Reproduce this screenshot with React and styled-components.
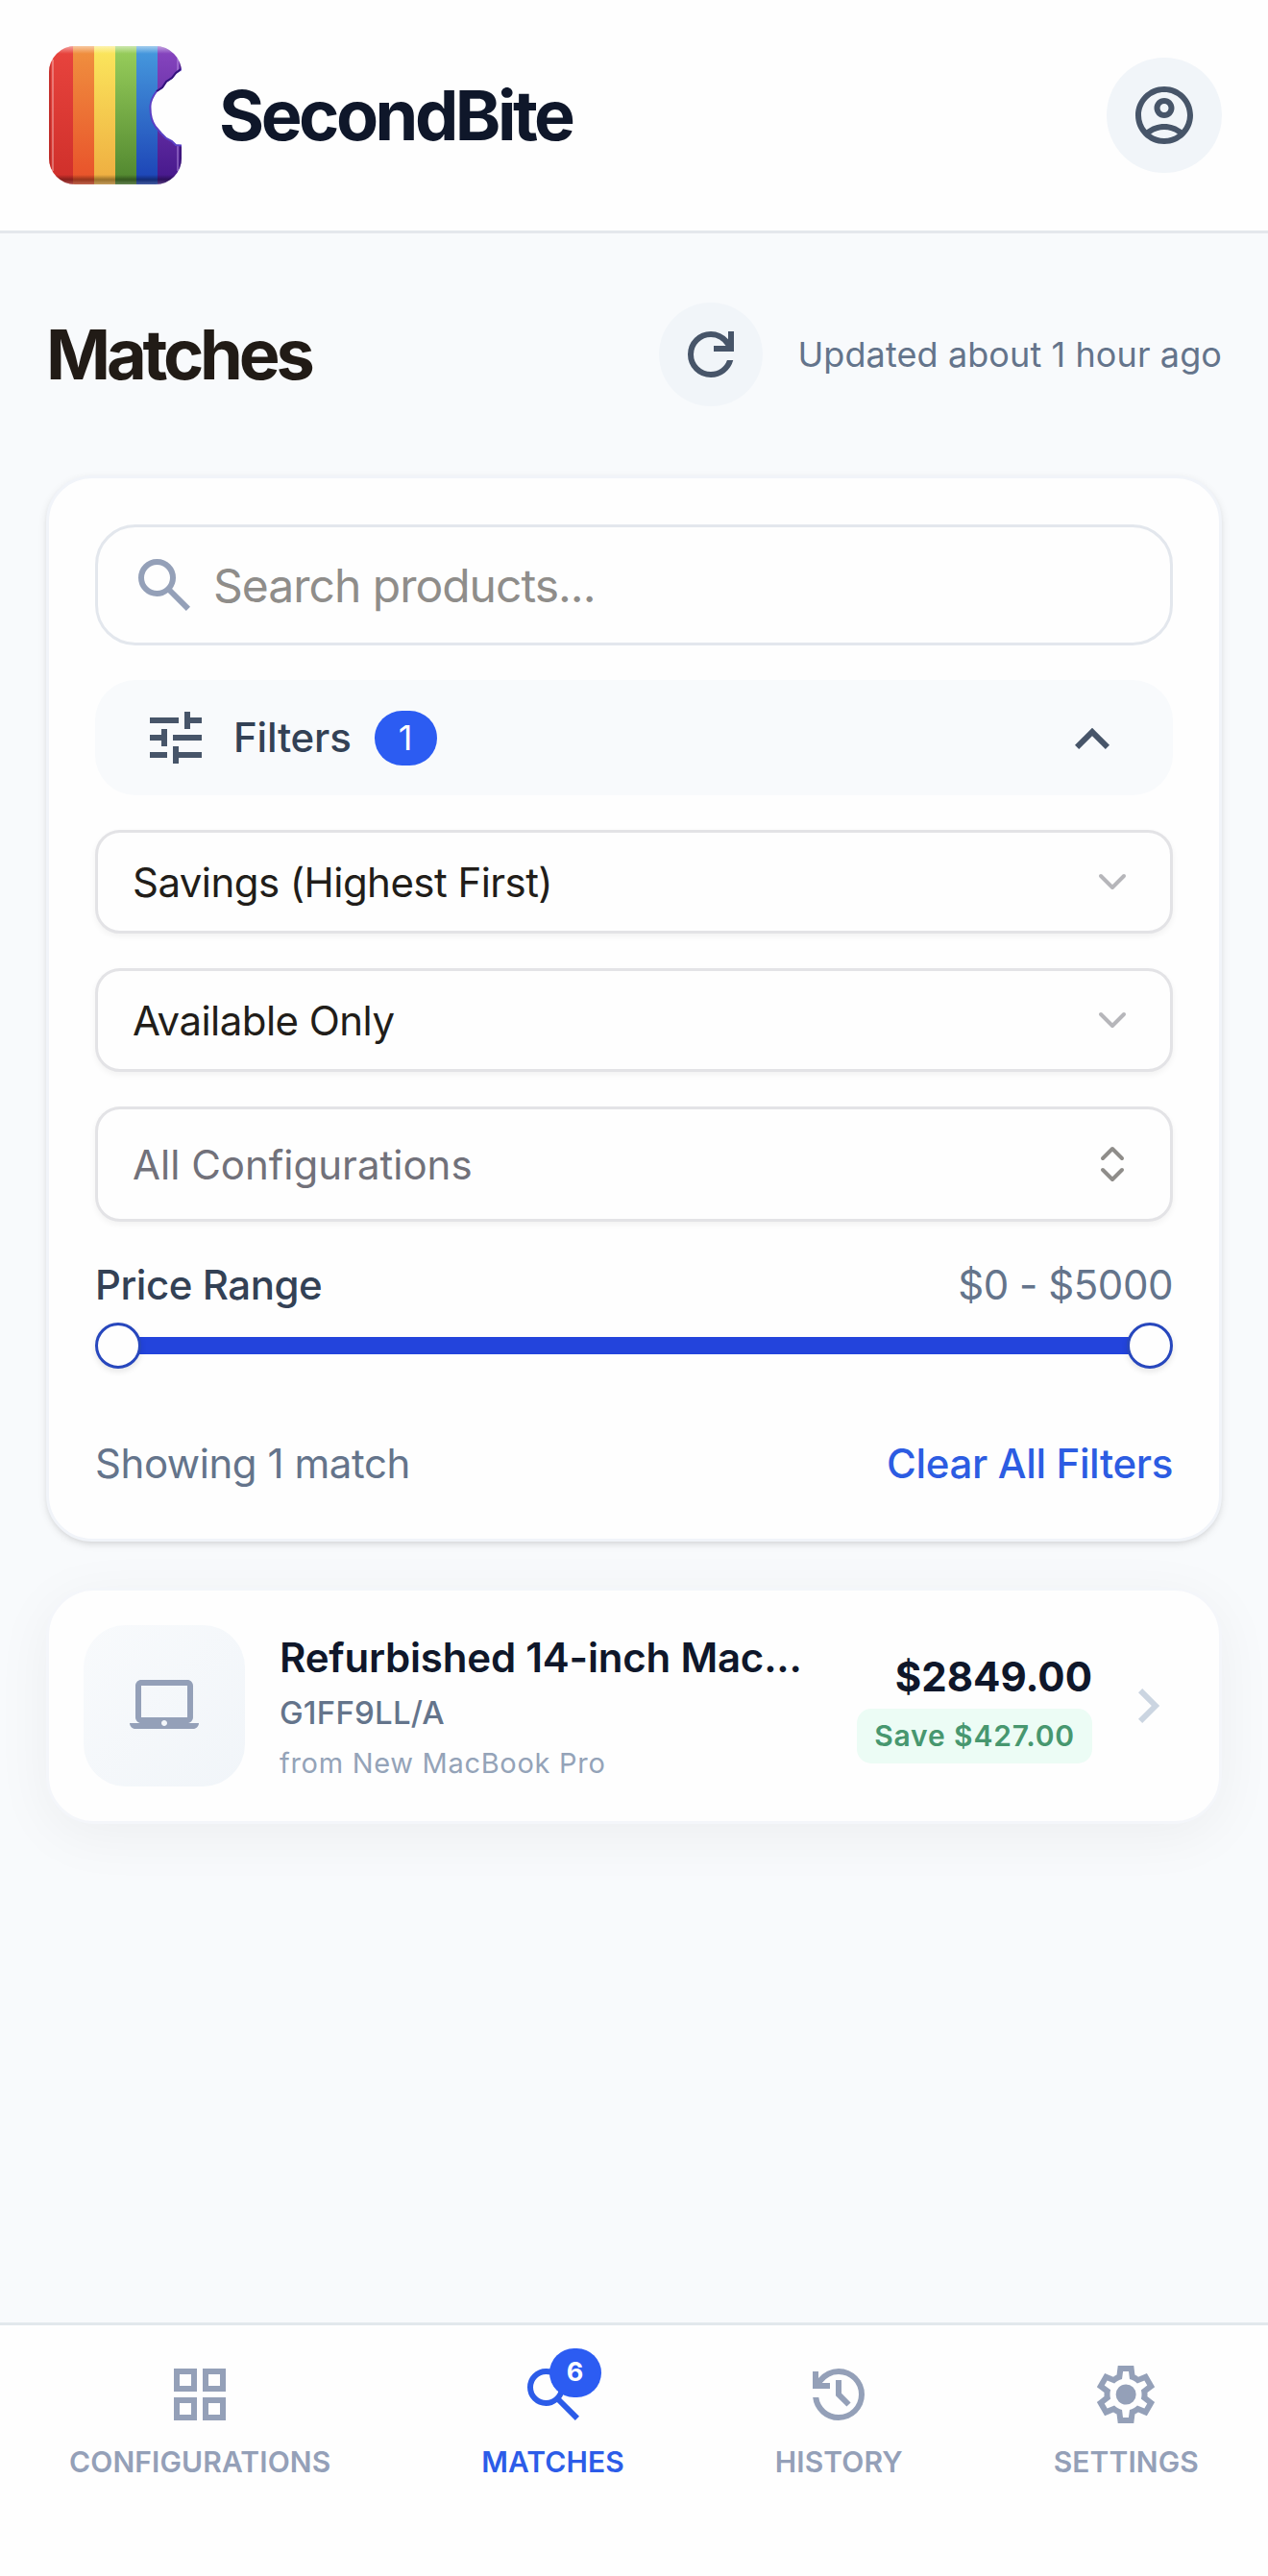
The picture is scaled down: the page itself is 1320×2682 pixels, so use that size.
import { useState } from 'react'
import styled, { createGlobalStyle } from 'styled-components'

const GlobalStyle = createGlobalStyle`
  * {
    box-sizing: border-box;
  }
  body {
    margin: 0;
    background: #f8fafc;
    font-family: Inter, "Liberation Sans", sans-serif;
    -webkit-font-smoothing: antialiased;
  }
  button,
  input {
    font-family: inherit;
    border: 0;
    padding: 0;
    margin: 0;
    background: none;
  }
`

const icons = {
  account:
    'M12 2C6.48 2 2 6.48 2 12s4.48 10 10 10 10-4.48 10-10S17.52 2 12 2zM7.35 18.5C8.66 17.56 10.26 17 12 17s3.34.56 4.65 1.5c-1.31.94-2.91 1.5-4.65 1.5s-3.34-.56-4.65-1.5zm10.79-1.38C16.45 15.8 14.32 15 12 15s-4.45.8-6.14 2.12C4.7 15.73 4 13.95 4 12c0-4.42 3.58-8 8-8s8 3.58 8 8c0 1.95-.7 3.73-1.86 5.12zM12 6c-1.93 0-3.5 1.57-3.5 3.5S10.07 13 12 13s3.5-1.57 3.5-3.5S13.93 6 12 6zm0 5c-.83 0-1.5-.67-1.5-1.5S11.17 8 12 8s1.5.67 1.5 1.5S12.83 11 12 11z',
  refresh:
    'M12 20q-3.35 0-5.675-2.325T4 12t2.325-5.675T12 4q1.725 0 3.3.713T18 6.75V4h2v7h-7V9h4.2q-.8-1.4-2.187-2.2T12 6Q9.5 6 7.75 7.75T6 12t1.75 4.25T12 18q1.925 0 3.475-1.1T17.65 14h2.1q-.7 2.65-2.85 4.325T12 20Z',
  search:
    'm19.6 21-6.3-6.3q-.75.6-1.725.95T9.5 16q-2.725 0-4.612-1.888T3 9.5t1.888-4.612T9.5 3t4.613 1.888T16 9.5q0 1.1-.35 2.075T14.7 13.3l6.3 6.3zM9.5 14q1.875 0 3.188-1.312T14 9.5t-1.312-3.187T9.5 5 6.313 6.313 5 9.5t1.313 3.188T9.5 14',
  tune: 'M11 21v-6h2v2h8v2h-8v2zm-8-2v-2h6v2zm4-4v-2H3v-2h4V9h2v6zm4-2v-2h10v2zm4-4V3h2v2h4v2h-4v2zM3 7V5h10v2z',
  chevronUp: 'm12 11.4-4.6 4.6L6 14.6l6-6 6 6-1.4 1.4z',
  chevronRight: 'M12.6 12 8 7.4 9.4 6l6 6-6 6L8 16.6z',
  laptop:
    'M20 18c1.1 0 1.99-.9 1.99-2L22 5c0-1.1-.9-2-2-2H4c-1.1 0-2 .9-2 2v11c0 1.1.9 2 2 2H0c0 1.1.9 2 2 2h20c1.1 0 2-.9 2-2h-4zM4 5h16v11H4V5zm8 14c-.55 0-1-.45-1-1s.45-1 1-1 1 .45 1 1-.45 1-1 1z',
  grid: 'M3 11V3h8v8zm0 10v-8h8v8zm10-10V3h8v8zm0 10v-8h8v8zM5 9h4V5H5zm10 0h4V5h-4zm0 10h4v-4h-4zM5 19h4v-4H5z',
  history:
    'M12 21q-3.45 0-6.013-2.288T3.05 13H5.1q.35 2.6 2.313 4.3T12 19q2.925 0 4.963-2.038T19 12t-2.038-4.963T12 5q-1.725 0-3.225.8T6.25 8H9v2H3V4h2v2.35q1.275-1.6 3.113-2.475T12 3q1.875 0 3.513.713t2.85 1.924 1.925 2.85T21 12t-.712 3.513-1.925 2.85-2.85 1.925T12 21m2.8-4.8L11 12.4V7h2v4.6l3.2 3.2z',
  settings:
    'm9.25 22-.4-3.2q-.325-.125-.612-.3t-.563-.375L4.7 19.375l-2.75-4.75 2.575-1.95Q4.5 12.5 4.5 12.338v-.675q0-.163.025-.338L1.95 9.375l2.75-4.75 2.975 1.25q.275-.2.575-.375t.6-.3l.4-3.2h5.5l.4 3.2q.325.125.613.3t.562.375l2.975-1.25 2.75 4.75-2.575 1.95q.025.175.025.338v.674q0 .163-.05.338l2.575 1.95-2.75 4.75-2.95-1.25q-.275.2-.575.375t-.6.3l-.4 3.2zM11 20h1.975l.35-2.65q.775-.2 1.438-.587t1.212-.938l2.475 1.025.975-1.7-2.15-1.625q.125-.35.175-.737T17.5 12t-.05-.787-.175-.738l2.15-1.625-.975-1.7-2.475 1.05q-.55-.575-1.212-.962t-1.438-.588L13 4h-1.975l-.35 2.65q-.775.2-1.437.588t-1.213.937L5.55 7.15l-.975 1.7 2.15 1.6q-.125.375-.175.75t-.05.8q0 .4.05.775t.175.75l-2.15 1.625.975 1.7 2.475-1.05q.55.575 1.213.963t1.437.587zm1.05-4.5q1.45 0 2.475-1.025T15.55 12t-1.025-2.475T12.05 8.5q-1.475 0-2.488 1.025T8.55 12t1.013 2.475T12.05 15.5'
}

const Svg = styled.svg`
  display: block;
  flex-shrink: 0;
  width: 72px;
  height: 72px;
  color: ${({ $color }) => $color || 'inherit'};
`

const Icon = ({ name, color }) => (
  <Svg viewBox='0 0 24 24' $color={color}>
    <path d={icons[name]} fill='currentColor' fillRule='evenodd' />
  </Svg>
)

const LineIcon = styled.svg`
  display: block;
  flex-shrink: 0;
  width: 48px;
  height: 48px;
  fill: none;
  stroke: ${({ $color }) => $color};
  stroke-width: 2;
  stroke-linecap: round;
  stroke-linejoin: round;
`

const stripes = [
  { x: 0, width: 28, from: '#e8443e', to: '#cf2f2a' },
  { x: 28, width: 22, from: '#f0913f', to: '#e8502a' },
  { x: 50, width: 22, from: '#fbe75d', to: '#eeac40' },
  { x: 72, width: 22, from: '#99cf5c', to: '#4f852e' },
  { x: 94, width: 22, from: '#479bde', to: '#1b41b5' },
  { x: 116, width: 28, from: '#8846c0', to: '#44178a' }
]

const bite =
  'M146 21 L141 24 L135 28 L131 33 L125 37 L121 43 L115 47 Q109 55 108.5 62 Q108 76 114 84 L120 91 L125 96 L131 99 L135 103 L146 104 Z'

const LogoSvg = styled.svg`
  display: block;
  width: 144px;
  height: 144px;
`

const Logo = () => (
  <LogoSvg viewBox='0 0 144 144'>
    <defs>
      {stripes.map((s, i) => (
        <linearGradient key={s.x} id={`stripe-${i}`} x1='0' y1='0' x2='0' y2='1'>
          <stop offset='0' stopColor={s.from} />
          <stop offset='1' stopColor={s.to} />
        </linearGradient>
      ))}
      <linearGradient id='bevel' x1='0' y1='0' x2='0' y2='1'>
        <stop offset='0' stopColor='#fff' stopOpacity='0.5' />
        <stop offset='0.055' stopColor='#fff' stopOpacity='0' />
        <stop offset='0.93' stopColor='#000' stopOpacity='0' />
        <stop offset='0.965' stopColor='#000' stopOpacity='0.35' />
        <stop offset='1' stopColor='#888' stopOpacity='0.4' />
      </linearGradient>
      <clipPath id='tile'>
        <rect x='3' y='0' width='138' height='144' rx='27' />
      </clipPath>
    </defs>
    <g clipPath='url(#tile)'>
      {stripes.map((s, i) => (
        <rect
          key={s.x}
          x={s.x}
          width={s.width}
          height='144'
          fill={`url(#stripe-${i})`}
        />
      ))}
      <rect width='144' height='144' fill='url(#bevel)' />
      <rect x='3' width='2' height='144' fill='#a32323' opacity='0.45' />
      <rect x='6' y='14' width='2' height='116' fill='#fff' opacity='0.3' />
      <rect x='136' y='12' width='2' height='118' fill='#c9a4ee' opacity='0.4' />
      <rect x='139' width='2' height='144' fill='#2c0b66' opacity='0.5' />
      <path d={bite} fill='#fefefe' stroke='#5a3fc4' strokeWidth='2' />
      <path
        d='M140 24 L135 28 L131 33 L125 37 L121 43 L115 47'
        fill='none'
        stroke='#35137a'
        strokeWidth='2'
      />
    </g>
    <path d='M141 26 L146 24 L146 103 L141 103 Z' fill='#fefefe' />
  </LogoSvg>
)

const Page = styled.div`
  display: flex;
  flex-direction: column;
  width: 1320px;
  height: 2682px;
  overflow: hidden;
  background: #f8fafc;
`

const Header = styled.header`
  display: flex;
  align-items: center;
  justify-content: space-between;
  height: 243px;
  padding: 0 48px;
  background: #fefefe;
  border-bottom: 3px solid #e4e7ec;
`

const Brand = styled.div`
  display: flex;
  align-items: center;
  gap: 36px;
`

const BrandName = styled.span`
  font-size: 72px;
  line-height: 96px;
  font-weight: 700;
  letter-spacing: -3.5px;
  color: #0f172a;
`

const RoundButton = styled.button`
  display: flex;
  align-items: center;
  justify-content: center;
  width: ${({ $size }) => $size}px;
  height: ${({ $size }) => $size}px;
  border-radius: 50%;
  background: #f1f5f9;
  color: #475569;
`

const Main = styled.main`
  flex: 1;
  display: flex;
  flex-direction: column;
  gap: 48px;
  padding: 72px 48px 0;
`

const TitleRow = styled.div`
  display: flex;
  align-items: center;
  justify-content: space-between;
  margin-bottom: 24px;
`

const Title = styled.h1`
  margin: 0;
  font-size: 72px;
  line-height: 96px;
  font-weight: 700;
  letter-spacing: -4.2px;
  color: #211b16;
`

const Updated = styled.div`
  display: flex;
  align-items: center;
  gap: 36px;
  font-size: 36px;
  line-height: 48px;
  letter-spacing: 0.1px;
  white-space: nowrap;
  color: #64748b;
`

const FilterCard = styled.section`
  display: flex;
  flex-direction: column;
  gap: 36px;
  height: 1110px;
  padding: 48px;
  border: 3px solid #f1f4f9;
  border-radius: 48px;
  background: #fefefe;
  box-shadow:
    0 3px 9px rgba(0, 0, 0, 0.1),
    0 3px 6px -3px rgba(0, 0, 0, 0.1);
`

const SearchBox = styled.label`
  display: flex;
  align-items: center;
  gap: 15px;
  height: 126px;
  padding: 0 33px;
  border: 3px solid #e3e7ed;
  border-radius: 42px;
`

const SearchInput = styled.input`
  flex: 1;
  min-width: 0;
  height: 72px;
  outline: none;
  font-size: 48px;
  letter-spacing: -1px;
  color: #211b16;
  &::placeholder {
    color: #8f8d8a;
    opacity: 1;
  }
`

const FilterToggle = styled.button`
  display: flex;
  align-items: center;
  height: 120px;
  padding: 0 48px;
  border-radius: 42px;
  background: #f8fafc;
  color: #475569;
  & > svg:last-child {
    margin-left: auto;
  }
`

const FilterLabel = styled.span`
  margin: 0 24px;
  font-size: 42px;
  line-height: 60px;
  font-weight: 500;
  letter-spacing: -0.2px;
  color: #334155;
`

const CountBadge = styled.span`
  display: flex;
  align-items: center;
  justify-content: center;
  width: 65px;
  height: 57px;
  border-radius: 29px;
  background: #2c5cf2;
  color: #fff;
  font-size: 36px;
`

const SelectBox = styled.button`
  display: flex;
  align-items: center;
  justify-content: space-between;
  height: ${({ $tall }) => ($tall ? 120 : 108)}px;
  padding: 0 36px;
  border: 3px solid #e3e3e6;
  border-radius: 26px;
  background: #fefefe;
  box-shadow: 0 3px 6px rgba(0, 0, 0, 0.05);
  font-size: 42px;
  letter-spacing: ${({ $tall }) => ($tall ? 0 : -0.55)}px;
  color: ${({ $tall }) => ($tall ? '#71717a' : '#211d19')};
`

const SplitRow = styled.div`
  display: flex;
  align-items: center;
  justify-content: space-between;
  font-size: 42px;
  line-height: 60px;
  letter-spacing: -0.45px;
  color: #64748b;
`

const PriceLabel = styled.span`
  font-weight: 500;
  color: #334155;
`

const ClearButton = styled.button`
  font-size: 42px;
  line-height: 60px;
  font-weight: 500;
  letter-spacing: -0.35px;
  color: #2c5ce2;
`

const Slider = styled.div`
  display: flex;
  align-items: center;
  height: 48px;
  margin: -27px 0 33px;
`

const Thumb = styled.span`
  z-index: 1;
  width: 48px;
  height: 48px;
  border: 3px solid #2747bd;
  border-radius: 50%;
  background: #fefefe;
  box-shadow: 0 3px 6px rgba(0, 0, 0, 0.1);
`

const Track = styled.span`
  flex: 1;
  height: 18px;
  margin: 0 -4px;
  background: #2344dc;
`

const MatchCard = styled.article`
  display: flex;
  align-items: center;
  height: 246px;
  padding: 36px;
  border: 3px solid #f4f6fa;
  border-radius: 50px;
  background: #fefefe;
  box-shadow: 0 12px 60px rgba(0, 0, 0, 0.05);
`

const Thumbnail = styled.div`
  display: flex;
  align-items: center;
  justify-content: center;
  width: 168px;
  height: 168px;
  border-radius: 44px;
  background: linear-gradient(135deg, #f8fafc, #f1f5f9);
`

const Details = styled.div`
  flex: 1;
  display: flex;
  flex-direction: column;
  margin-left: 36px;
  padding-top: 3px;
  white-space: nowrap;
`

const ProductName = styled.span`
  font-size: 42px;
  line-height: 60px;
  font-weight: 600;
  letter-spacing: -0.2px;
  color: #0f172a;
`

const PartNumber = styled.span`
  font-size: 33px;
  line-height: 55px;
  font-weight: 500;
  letter-spacing: 0.2px;
  color: #64748b;
`

const Source = styled.span`
  font-size: 29px;
  line-height: 49px;
  letter-spacing: 0.7px;
  color: #94a3b8;
`

const Pricing = styled.div`
  display: flex;
  flex-direction: column;
  align-items: flex-end;
  gap: 3px;
  margin-right: 24px;
`

const Price = styled.span`
  font-size: 42px;
  line-height: 60px;
  font-weight: 700;
  color: #0f172a;
`

const Savings = styled.span`
  padding: 0 18px;
  border-radius: 15px;
  background: #ecfcf5;
  font-size: 30px;
  line-height: 57px;
  font-weight: 600;
  letter-spacing: 0.85px;
  color: #47976f;
`

const Nav = styled.nav`
  display: flex;
  justify-content: space-between;
  height: 264px;
  padding: 36px 72px 0;
  border-top: 3px solid #e2e8ec;
  background: #fefefe;
`

const NavItem = styled.button`
  display: flex;
  flex-direction: column;
  align-items: center;
  height: 132px;
  gap: 12px;
  font-size: 30px;
  line-height: 45px;
  font-weight: 600;
  letter-spacing: 0.12px;
  text-transform: uppercase;
  color: ${({ $active }) => ($active ? '#2c5ce8' : '#94a0b8')};
`

const NavIcon = styled.span`
  position: relative;
`

const NavBadge = styled.span`
  position: absolute;
  top: -12px;
  left: 32px;
  width: 54px;
  height: 51px;
  border-radius: 26px;
  background: #2c5cf2;
  color: #fff;
  font-size: 27px;
  line-height: 49px;
  font-weight: 700;
  text-align: center;
`

const tabs = [
  { id: 'configurations', icon: 'grid' },
  { id: 'matches', icon: 'search', count: 6 },
  { id: 'history', icon: 'history' },
  { id: 'settings', icon: 'settings' }
]

const Select = ({ children }) => (
  <SelectBox>
    {children}
    <LineIcon viewBox='0 0 24 24' $color='#b6b6ba'>
      <path d='m6 9 6 6 6-6' />
    </LineIcon>
  </SelectBox>
)

const Filters = () => {
  const [query, setQuery] = useState('')

  return (
    <FilterCard>
      <SearchBox>
        <Icon name='search' color='#94a0b8' />
        <SearchInput
          placeholder='Search products...'
          value={query}
          onChange={(e) => setQuery(e.target.value)}
        />
      </SearchBox>
      <FilterToggle>
        <Icon name='tune' />
        <FilterLabel>Filters</FilterLabel>
        <CountBadge>1</CountBadge>
        <Icon name='chevronUp' />
      </FilterToggle>
      <Select>Savings (Highest First)</Select>
      <Select>Available Only</Select>
      <SelectBox $tall>
        All Configurations
        <LineIcon viewBox='0 0 24 24' $color='#8f8d8a'>
          <path d='m7 15 5 5 5-5M7 9l5-5 5 5' />
        </LineIcon>
      </SelectBox>
      <SplitRow>
        <PriceLabel>Price Range</PriceLabel>
        <span>$0 - $5000</span>
      </SplitRow>
      <Slider>
        <Thumb />
        <Track />
        <Thumb />
      </Slider>
      <SplitRow>
        <span>Showing 1 match</span>
        <ClearButton>Clear All Filters</ClearButton>
      </SplitRow>
    </FilterCard>
  )
}

const Match = ({ name, part, source, price, savings }) => (
  <MatchCard>
    <Thumbnail>
      <Icon name='laptop' color='#94a0b8' />
    </Thumbnail>
    <Details>
      <ProductName>{name}</ProductName>
      <PartNumber>{part}</PartNumber>
      <Source>from {source}</Source>
    </Details>
    <Pricing>
      <Price>{price}</Price>
      <Savings>Save {savings}</Savings>
    </Pricing>
    <Icon name='chevronRight' color='#cbd5e1' />
  </MatchCard>
)

const App = () => {
  const [tab, setTab] = useState('matches')

  return (
    <>
      <GlobalStyle />
      <Page>
        <Header>
          <Brand>
            <Logo />
            <BrandName>SecondBite</BrandName>
          </Brand>
          <RoundButton $size={120}>
            <Icon name='account' />
          </RoundButton>
        </Header>
        <Main>
          <TitleRow>
            <Title>Matches</Title>
            <Updated>
              <RoundButton $size={108}>
                <Icon name='refresh' />
              </RoundButton>
              Updated about 1 hour ago
            </Updated>
          </TitleRow>
          <Filters />
          <Match
            name='Refurbished 14-inch Mac...'
            part='G1FF9LL/A'
            source='New MacBook Pro'
            price='$2849.00'
            savings='$427.00'
          />
        </Main>
        <Nav>
          {tabs.map(({ id, icon, count }) => (
            <NavItem key={id} $active={id === tab} onClick={() => setTab(id)}>
              <NavIcon>
                <Icon name={icon} />
                {count && <NavBadge>{count}</NavBadge>}
              </NavIcon>
              {id}
            </NavItem>
          ))}
        </Nav>
      </Page>
    </>
  )
}

export default App
